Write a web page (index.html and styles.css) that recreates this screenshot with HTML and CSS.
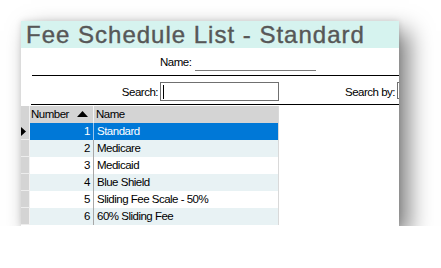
FILE: index.html
```html
<!DOCTYPE html>
<html>
<head>
<meta charset="utf-8">
<link rel="stylesheet" href="styles.css">
</head>
<body>
<div class="page">
  <div class="window">
    <div class="title">Fee Schedule List - Standard</div>
    <div class="name-row">
      <span class="lbl">Name:</span>
      <span class="name-field"></span>
    </div>
    <div class="rule rule-a"></div>
    <div class="search-row">
      <span class="lbl search-lbl">Search:</span>
      <div class="input"><span class="caret"></span></div>
      <span class="lbl searchby-lbl">Search by:</span>
      <div class="input input-cut"></div>
    </div>
    <div class="rule rule-b"></div>
    <div class="grid">
      <div class="row head">
        <div class="ind"></div>
        <div class="num"><span>Number</span><svg class="sort" width="11" height="6" viewBox="0 0 11 6"><polygon points="0,6 5.5,0 11,6" fill="#000"/></svg></div>
        <div class="nm">Name</div>
      </div>
      <div class="row sel">
        <div class="ind"><svg class="ptr" width="5" height="9" viewBox="0 0 5 9"><polygon points="0,0 5,4.5 0,9" fill="#000"/></svg></div>
        <div class="num">1</div>
        <div class="nm">Standard</div>
      </div>
      <div class="row alt">
        <div class="ind"></div>
        <div class="num">2</div>
        <div class="nm">Medicare</div>
      </div>
      <div class="row">
        <div class="ind"></div>
        <div class="num">3</div>
        <div class="nm">Medicaid</div>
      </div>
      <div class="row alt">
        <div class="ind"></div>
        <div class="num">4</div>
        <div class="nm">Blue Shield</div>
      </div>
      <div class="row">
        <div class="ind"></div>
        <div class="num">5</div>
        <div class="nm">Sliding Fee Scale - 50%</div>
      </div>
      <div class="row alt">
        <div class="ind"></div>
        <div class="num">6</div>
        <div class="nm">60% Sliding Fee</div>
      </div>
    </div>
  </div>
</div>
</body>
</html>
```

FILE: styles.css
```css
html, body {
  margin: 0;
  padding: 0;
  background: #ffffff;
}
.page {
  padding: 21px 0 0 21px;
}
.window {
  width: 378px;
  height: 205px;
  background: #ffffff;
  overflow: hidden;
  box-shadow: 10px 10px 22px rgba(0, 0, 0, 0.5), 0 0 6px rgba(0, 0, 0, 0.12);
  font-family: "Liberation Sans", Arial, sans-serif;
  font-size: 11.5px;
  letter-spacing: -0.5px;
  color: #000;
}
.title {
  height: 27px;
  box-sizing: border-box;
  padding: 1px 0 0 5px;
  line-height: 26px;
  font-size: 24px;
  letter-spacing: 1px;
  color: #575757;
  -webkit-text-stroke: 0.4px #575757;
  background: #d6f3ef;
  white-space: nowrap;
}
.lbl {
  line-height: 13px;
  white-space: nowrap;
  flex-shrink: 0;
}
.name-row {
  height: 27px;
  box-sizing: border-box;
  padding: 8px 0 0 139px;
  display: flex;
  align-items: flex-start;
  gap: 4px;
}
.name-field {
  width: 121px;
  height: 14px;
  flex-shrink: 0;
  border-bottom: 1px solid #7a7a7a;
}
.rule {
  height: 1px;
  background: #000;
}
.rule-a { margin-left: 11px; }
.rule-b { margin-left: 10px; }
.search-row {
  height: 28px;
  box-sizing: border-box;
  padding-top: 6px;
  display: flex;
  align-items: flex-start;
}
.search-lbl {
  width: 139px;
  box-sizing: border-box;
  padding-right: 2px;
  text-align: right;
  margin-top: 4px;
}
.input {
  width: 119px;
  height: 19px;
  box-sizing: border-box;
  border: 1px solid #707070;
  flex-shrink: 0;
  display: flex;
  align-items: center;
}
.caret {
  width: 1px;
  height: 14px;
  margin-left: 2px;
  background: #000;
}
.searchby-lbl {
  width: 118px;
  box-sizing: border-box;
  padding-right: 2px;
  text-align: right;
  margin-top: 4px;
}
.input-cut {
  width: 60px;
  height: 17px;
}
.grid {
  margin-top: 1px;
  width: 257px;
  border-right: 1px solid #d9d9d9;
}
.row {
  display: flex;
  height: 17px;
  line-height: 17px;
  background: #ffffff;
}
.row.alt { background: #e8f2f4; }
.row.sel { background: #0078d7; color: #ffffff; }
.row.head { background: #d4d4d4; color: #000; }
.ind {
  width: 9px;
  height: 17px;
  box-sizing: border-box;
  background: #d4d4d4;
  border-right: 1px solid #f2f2f2;
  border-bottom: 1px solid #ededed;
  flex-shrink: 0;
  display: flex;
  align-items: center;
}
.head .ind { border-bottom: none; }
.ptr { display: block; }
.num {
  width: 64px;
  box-sizing: border-box;
  border-right: 1px solid #a8a8a8;
  padding-right: 3px;
  text-align: right;
  flex-shrink: 0;
}
.sel .num { border-right-color: #9cc6ec; }
.head .num {
  border-right-color: #f4f4f4;
  text-align: left;
  padding-left: 1px;
  display: flex;
  align-items: center;
  gap: 8px;
}
.sort { display: block; margin-bottom: 1px; }
.nm {
  flex: 1;
  padding-left: 3px;
  white-space: nowrap;
}
.head .nm { padding-left: 2px; }
```
